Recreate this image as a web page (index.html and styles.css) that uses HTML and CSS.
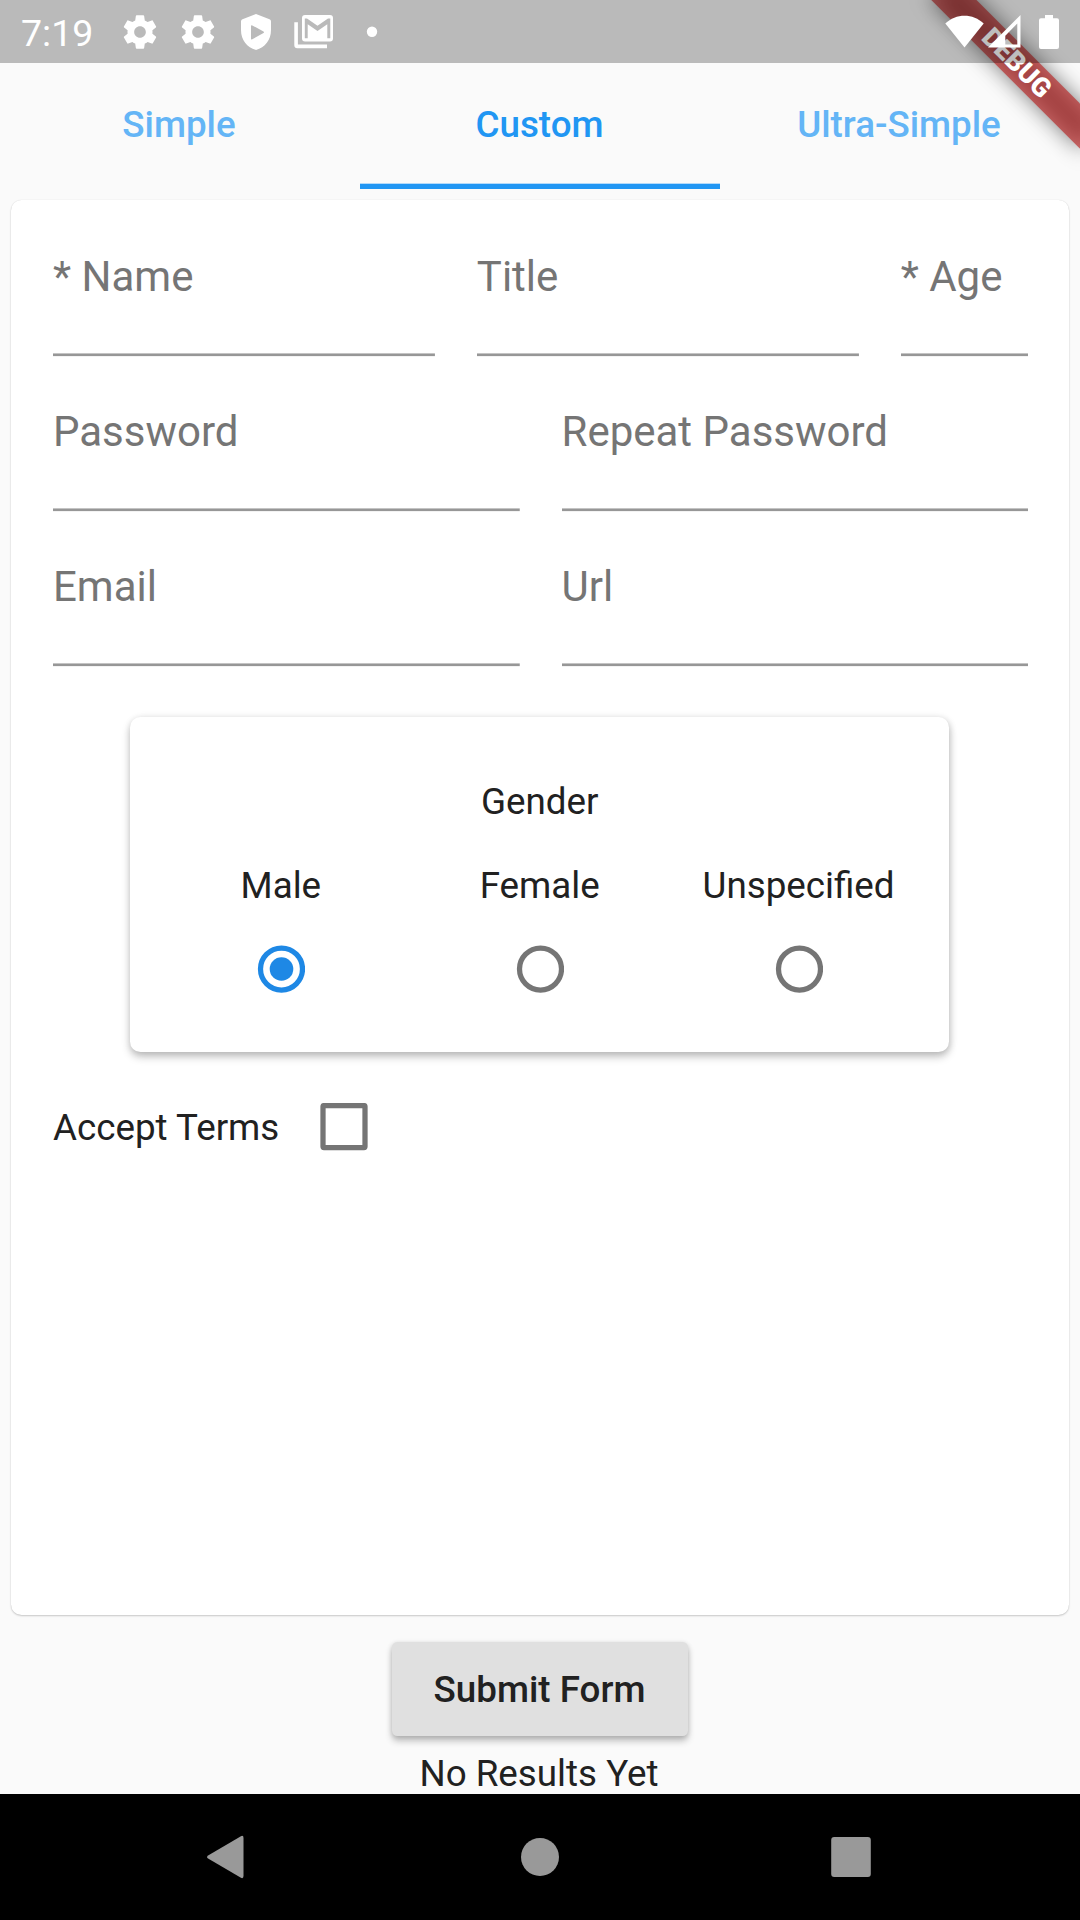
FILE: index.html
```html
<!DOCTYPE html>
<html lang="en">
<head>
<meta charset="utf-8">
<title>Custom Form</title>
<link rel="stylesheet" href="styles.css">
</head>
<body>
<div class="screen">
  <header class="status">
    <span class="time">7:19</span>
    <div class="notifications">
      <svg class="icon" viewBox="0 0 24 24"><path d="M19.43 12.98c.04-.32.07-.64.07-.98s-.03-.66-.07-.98l2.11-1.65c.19-.15.24-.42.12-.64l-2-3.46c-.12-.22-.39-.3-.61-.22l-2.49 1c-.52-.4-1.08-.73-1.69-.98l-.38-2.65C14.46 2.18 14.25 2 14 2h-4c-.25 0-.46.18-.49.42l-.38 2.65c-.61.25-1.17.59-1.69.98l-2.49-1c-.23-.09-.49 0-.61.22l-2 3.46c-.13.22-.07.49.12.64l2.11 1.65c-.04.32-.07.65-.07.98s.03.66.07.98l-2.11 1.65c-.19.15-.24.42-.12.64l2 3.46c.12.22.39.3.61.22l2.49-1c.52.4 1.08.73 1.69.98l.38 2.65c.03.24.24.42.49.42h4c.25 0 .46-.18.49-.42l.38-2.65c.61-.25 1.17-.59 1.69-.98l2.49 1c.23.09.49 0 .61-.22l2-3.46c.12-.22.07-.49-.12-.64l-2.11-1.65zM12 15.5c-1.93 0-3.5-1.57-3.5-3.5s1.57-3.5 3.5-3.5 3.5 1.57 3.5 3.5-1.57 3.5-3.5 3.5z"/></svg>
      <svg class="icon" viewBox="0 0 24 24"><path d="M19.43 12.98c.04-.32.07-.64.07-.98s-.03-.66-.07-.98l2.11-1.65c.19-.15.24-.42.12-.64l-2-3.46c-.12-.22-.39-.3-.61-.22l-2.49 1c-.52-.4-1.08-.73-1.69-.98l-.38-2.65C14.46 2.18 14.25 2 14 2h-4c-.25 0-.46.18-.49.42l-.38 2.65c-.61.25-1.17.59-1.69.98l-2.49-1c-.23-.09-.49 0-.61.22l-2 3.46c-.13.22-.07.49.12.64l2.11 1.65c-.04.32-.07.65-.07.98s.03.66.07.98l-2.11 1.65c-.19.15-.24.42-.12.64l2 3.46c.12.22.39.3.61.22l2.49-1c.52.4 1.08.73 1.69.98l.38 2.65c.03.24.24.42.49.42h4c.25 0 .46-.18.49-.42l.38-2.65c.61-.25 1.17-.59 1.69-.98l2.49 1c.23.09.49 0 .61-.22l2-3.46c.12-.22.07-.49-.12-.64l-2.11-1.65zM12 15.5c-1.93 0-3.5-1.57-3.5-3.5s1.57-3.5 3.5-3.5 3.5 1.57 3.5 3.5-1.57 3.5-3.5 3.5z"/></svg>
      <svg class="icon" viewBox="0 0 40 40"><path fill-rule="evenodd" d="M20 2 L33.5 7.2 Q35 7.8 35 9.400 V18 C35 28 29 35.500 20 38 C11 35.500 5 28 5 18 V9.400 Q5 7.800 6.500 7.200 Z M15 14.200 V26.600 Q15 28 16.300 27.200 L27.500 21 Q28.700 20.300 27.500 19.500 L16.300 13.400 Q15 12.800 15 14.200 Z"/></svg>
      <svg class="icon" viewBox="0 0 40 40"><path fill-rule="evenodd" d="M11 3 H36 Q39 3 39 6 V26.500 Q39 29.500 36 29.500 H11 Q8 29.500 8 26.500 V6 Q8 3 11 3 Z M10.800 6.500 V26.200 H13.700 V12.300 L23.500 19 L33.300 12.300 V26.200 H36.300 V6.500 H34 L23.500 13.800 L13 6.500 Z"/><path d="M0.300 10.300 H3.900 V32.500 H33 V36.300 H3.300 Q0.300 36.300 0.300 33.300 Z"/></svg>
      <svg class="icon" viewBox="0 0 40 40"><circle cx="20" cy="19.700" r="5.200"/></svg>
    </div>
    <div class="system">
      <svg class="wifi" viewBox="0 0 39 33"><path d="M19.500 32.600 L0.300 8.600 C11 -2 28 -2 38.700 8.600 Z"/></svg>
      <svg class="signal" viewBox="0 0 33 33"><path fill-rule="evenodd" d="M0 32.500 L32.500 0 V32.500 Z M17.300 20.800 V29.500 H29.300 V8.500 Z"/></svg>
      <svg class="battery" viewBox="0 0 20 34"><path d="M6 0 H14 V3.300 H18 Q20 3.300 20 5.300 V32 Q20 34 18 34 H2 Q0 34 0 32 V5.300 Q0 3.300 2 3.300 H6 Z"/></svg>
    </div>
  </header>

  <div class="ribbon">
    <div class="ribbon-shadow"></div>
    <div class="ribbon-band">DEBUG</div>
  </div>

  <nav class="tabs">
    <a class="tab">Simple</a>
    <a class="tab active">Custom</a>
    <a class="tab">Ultra-Simple</a>
  </nav>

  <main class="form-card">
    <div class="row identity">
      <div class="field"><label>* Name</label></div>
      <div class="field"><label>Title</label></div>
      <div class="field"><label>* Age</label></div>
    </div>
    <div class="row">
      <div class="field"><label>Password</label></div>
      <div class="field"><label>Repeat Password</label></div>
    </div>
    <div class="row">
      <div class="field"><label>Email</label></div>
      <div class="field"><label>Url</label></div>
    </div>

    <section class="gender">
      <div class="legend">Gender</div>
      <div class="options">
        <div class="option"><span>Male</span>
          <svg class="radio selected" viewBox="0 0 48 48"><circle class="ring" cx="24.500" cy="24" r="21"/><circle class="dot" cx="24.500" cy="24" r="11.800"/></svg>
        </div>
        <div class="option"><span>Female</span>
          <svg class="radio" viewBox="0 0 48 48"><circle class="ring" cx="24.500" cy="24" r="21"/></svg>
        </div>
        <div class="option"><span>Unspecified</span>
          <svg class="radio" viewBox="0 0 48 48"><circle class="ring" cx="24.500" cy="24" r="21"/></svg>
        </div>
      </div>
    </section>

    <div class="terms">
      <span>Accept Terms</span>
      <svg class="checkbox" viewBox="0 0 48 48"><rect x="3" y="2.600" width="42" height="42" rx="1"/></svg>
    </div>
  </main>

  <footer class="actions">
    <div class="submit">Submit Form</div>
    <div class="results">No Results Yet</div>
  </footer>

  <div class="navbar">
    <svg viewBox="0 0 48 48"><path d="M7.500 22.200 L39.500 3.400 Q42.500 1.800 42.500 5 V43 Q42.500 46.200 39.500 44.600 L7.500 25.800 Q4.500 24 7.500 22.200 Z"/></svg>
    <svg class="home" viewBox="0 0 48 48"><circle cx="24" cy="24" r="19"/></svg>
    <svg viewBox="0 0 48 48"><rect x="4.200" y="4" width="39.600" height="40" rx="3"/></svg>
  </div>
</div>
</body>
</html>
```
FILE: styles.css
```css
* { box-sizing: border-box; }

body {
  margin: 0;
  background: #fafafa;
  color: #212121;
  font-family: Roboto, sans-serif;
  font-size: 36.75px;
  line-height: 43px;
}

svg { display: block; }

.screen {
  position: relative;
  display: flex;
  flex-direction: column;
  width: 1080px;
  height: 1920px;
  overflow: hidden;
}

/* Status bar: a translucent scrim over the app, ribbon included */
.status {
  position: relative;
  z-index: 2;
  display: flex;
  align-items: center;
  height: 63px;
  padding: 0 21px 0 21px;
  background: rgba(0, 0, 0, 0.255);
  color: #fff;
  fill: #fff;
}

.time {
  width: 99px;
  font-size: 37.5px;
  padding-top: 3px;
}

.notifications { display: flex; gap: 18px; }
.icon { width: 40px; height: 40px; }

.system {
  display: flex;
  align-items: center;
  margin-left: auto;
}

.wifi { width: 39px; height: 33px; margin-right: 4px; }
.signal { width: 33px; height: 33px; margin-right: 18px; }
.battery { width: 20px; height: 34px; }

/* Diagonal corner banner */
.ribbon {
  position: absolute;
  z-index: 1;
  left: 911.9px;
  top: 47.4px;
  width: 210px;
  height: 31.5px;
  transform: rotate(45deg);
}

.ribbon-shadow {
  position: absolute;
  inset: 0;
  background: rgba(0, 0, 0, 0.5);
  filter: blur(10.4px);
}

.ribbon-band {
  position: absolute;
  inset: 0;
  background: rgba(183, 28, 28, 0.63);
  color: #fff;
  font-size: 26.8px;
  font-weight: 900;
  line-height: 33.5px;
  text-align: center;
}

.tabs {
  display: grid;
  grid-template-columns: repeat(3, 1fr);
  height: 126px;
}

.tab {
  padding: 40px 2px 0 0;
  color: #64b5f6;
  font-weight: 500;
  text-align: center;
}

.tab.active {
  padding-right: 1px;
  color: #2196f3;
  background: linear-gradient(#b3dafa 1px, #2196f3 1px) bottom / 100% 6px no-repeat;
}

.form-card {
  height: 1415px;
  margin: 11px 11px 0;
  padding: 2px 41px 0 42px;
  background: #fff;
  border-radius: 10.5px;
  box-shadow: 0 1px 2px rgba(0, 0, 0, 0.2), 0 0 1px rgba(0, 0, 0, 0.12);
}

.row {
  display: grid;
  grid-template-columns: 1fr 1fr;
  column-gap: 42px;
  height: 155px;
}

.row.identity { grid-template-columns: 3fr 3fr 1fr; }

.field {
  padding-top: 50px;
  color: #757575;
  font-size: 42px;
  line-height: 49px;
  white-space: nowrap;
  background: linear-gradient(#c4c4c4 1px, #979797 1px, #979797 3px, #f3f3f3 3px) bottom / 100% 4px no-repeat;
}

.gender {
  height: 335px;
  margin: 50px 79px 0 77.4px;
  padding: 63px 21px 0;
  background: #fff;
  border-radius: 10.5px;
  box-shadow: 0 5px 8px rgba(0, 0, 0, 0.22), 1px 1px 7px rgba(0, 0, 0, 0.13);
}

.legend { text-align: center; }

.options {
  display: grid;
  grid-template-columns: repeat(3, 1fr);
  margin-top: 41px;
}

.option {
  display: flex;
  flex-direction: column;
  align-items: center;
  gap: 38px;
}

.radio { width: 48px; height: 48px; }
.ring { fill: none; stroke: #757575; stroke-width: 5.25px; }
.selected .ring { stroke: #1e88e5; }
.dot { fill: #1e88e5; }

.terms {
  display: flex;
  align-items: center;
  gap: 41px;
  margin-top: 51px;
}

.checkbox {
  width: 48px;
  height: 48px;
  fill: none;
  stroke: #757575;
  stroke-width: 5.25px;
}

.actions {
  display: flex;
  flex-direction: column;
  align-items: center;
  height: 179px;
  padding-top: 27px;
  overflow: hidden;
}

.submit {
  width: 296px;
  height: 94px;
  flex: none;
  padding: 26px 1px 0 0;
  background: #e0e0e0;
  border-radius: 5.25px;
  box-shadow: 0 5px 7px rgba(0, 0, 0, 0.24), 0 1px 5px rgba(0, 0, 0, 0.13);
  font-weight: 500;
  text-align: center;
}

.results {
  margin-top: 16px;
  padding-right: 2px;
}

.navbar {
  display: flex;
  justify-content: space-between;
  align-items: center;
  height: 126px;
  padding: 0 205px 0 201px;
  background: #000;
  fill: #999;
}

.navbar svg { width: 48px; height: 48px; }
.navbar .home { margin-left: 4px; }
```
